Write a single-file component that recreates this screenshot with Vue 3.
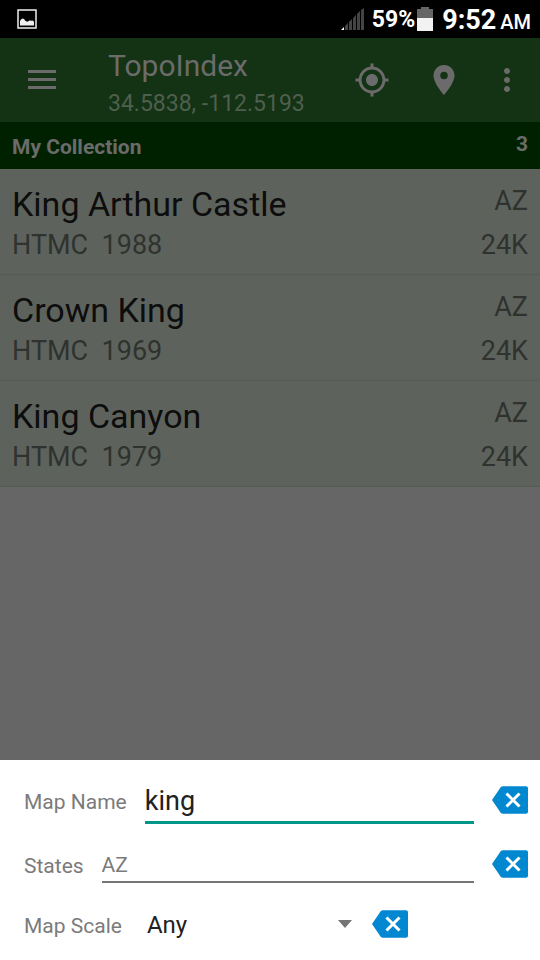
<script setup>
import { ref } from 'vue'

const maps = [
  { name: 'King Arthur Castle', series: 'HTMC', year: 1988, state: 'AZ', scale: '24K' },
  { name: 'Crown King', series: 'HTMC', year: 1969, state: 'AZ', scale: '24K' },
  { name: 'King Canyon', series: 'HTMC', year: 1979, state: 'AZ', scale: '24K' },
]

const mapName = ref('king')
const states = ref('')
const scale = ref('Any')
</script>

<template>
  <div class="screen">
    <div class="status">
      <svg class="picture" width="20" height="20" viewBox="0 0 20 20" aria-hidden="true">
        <rect x="1" y="1" width="18" height="18" fill="none" stroke="#eee" stroke-width="1.5" />
        <path d="M3 16.500v-4.500l1-1.500 1.500-1 1.500.5 1.500 2 2 .7 2-1.200 1.500.3 1.500-.3 1.500 1.200v3.800z" fill="#eee" />
      </svg>
      <div class="status-right">
        <svg class="signal" width="23" height="22" viewBox="0 0 23 22" aria-hidden="true">
          <path d="M4 18l3-3v7H4zM8 14l3-3v11H8zM12 10l3-3v15h-3zM16 6l3-3v19h-3zM20 2l3-2v22h-3z" fill="#444" />
          <path d="M0 22l3-3v3z" fill="#fff" />
        </svg>
        <span class="percent">59%</span>
        <svg class="battery" width="16" height="24" viewBox="0 0 16 24" aria-hidden="true">
          <path d="M4 0h8v2h4v9H0V2h4z" fill="#666" />
          <path d="M0 11h16v13H0z" fill="#f2f2f2" />
        </svg>
        <span class="clock">9:52</span>
        <span class="meridiem">AM</span>
      </div>
    </div>

    <header class="appbar">
      <button class="icon-button" type="button" aria-label="Menu">
        <svg width="28" height="20" viewBox="0 0 28 20"><path d="M0 0h28v3H0zM0 8h28v3H0zM0 16h28v3H0z" /></svg>
      </button>
      <div class="titles">
        <h1>TopoIndex</h1>
        <p>34.5838, -112.5193</p>
      </div>
      <div class="actions">
        <button class="icon-button" type="button" aria-label="My location">
          <svg width="36" height="36" viewBox="0 0 24 24"><path d="M12 8c-2.210 0-4 1.790-4 4s1.790 4 4 4 4-1.790 4-4-1.790-4-4-4zm8.940 3A8.994 8.994 0 0 0 13 3.060V1h-2v2.060A8.994 8.994 0 0 0 3.060 11H1v2h2.060A8.994 8.994 0 0 0 11 20.940V23h2v-2.060A8.994 8.994 0 0 0 20.940 13H23v-2h-2.060zM12 19c-3.870 0-7-3.130-7-7s3.130-7 7-7 7 3.130 7 7-3.130 7-7 7z" /></svg>
        </button>
        <button class="icon-button" type="button" aria-label="Place">
          <svg width="36" height="36" viewBox="0 0 24 24"><path d="M12 2C8.130 2 5 5.130 5 9c0 5.250 7 13 7 13s7-7.750 7-13c0-3.870-3.130-7-7-7zm0 9.500a2.500 2.500 0 1 1 0-5 2.500 2.500 0 0 1 0 5z" /></svg>
        </button>
        <button class="icon-button more" type="button" aria-label="More options">
          <svg width="36" height="36" viewBox="0 0 24 24"><path d="M12 8c1.100 0 2-.9 2-2s-.9-2-2-2-2 .9-2 2 .9 2 2 2zm0 2c-1.100 0-2 .9-2 2s.9 2 2 2 2-.9 2-2-.9-2-2-2zm0 6c-1.100 0-2 .9-2 2s.9 2 2 2 2-.9 2-2-.9-2-2-2z" /></svg>
        </button>
      </div>
    </header>

    <main>
      <h2 class="section">
        <span>My Collection</span>
        <span class="count">{{ maps.length }}</span>
      </h2>
      <ul class="list">
        <li v-for="map in maps" :key="map.name">
          <div class="about">
            <span class="name">{{ map.name }}</span>
            <span class="detail">{{ map.series }}&nbsp; {{ map.year }}</span>
          </div>
          <div class="meta">
            <span class="detail">{{ map.state }}</span>
            <span class="detail">{{ map.scale }}</span>
          </div>
        </li>
      </ul>
    </main>

    <form class="sheet" @submit.prevent>
      <div class="row">
        <label for="map-name">Map Name</label>
        <input id="map-name" v-model="mapName" class="active" type="text" />
        <button class="clear" type="button" aria-label="Clear map name" @click="mapName = ''">
          <svg width="36" height="28" viewBox="0 0 36 28"><path class="tag" d="M11 .3H34a2 2 0 0 1 2 2v23.400a2 2 0 0 1-2 2H11a3 3 0 0 1-2.500-1.300L0 14 8.500 1.600A3 3 0 0 1 11 .3z" /><path class="cross" d="M14.500 7.500l13 13M27.500 7.500l-13 13" /></svg>
        </button>
      </div>
      <div class="row">
        <label for="states">States</label>
        <input id="states" v-model="states" type="text" placeholder="AZ" />
        <button class="clear" type="button" aria-label="Clear states" @click="states = ''">
          <svg width="36" height="28" viewBox="0 0 36 28"><path class="tag" d="M11 .3H34a2 2 0 0 1 2 2v23.400a2 2 0 0 1-2 2H11a3 3 0 0 1-2.500-1.300L0 14 8.500 1.600A3 3 0 0 1 11 .3z" /><path class="cross" d="M14.500 7.500l13 13M27.500 7.500l-13 13" /></svg>
        </button>
      </div>
      <div class="row scale-row">
        <label for="scale">Map Scale</label>
        <div class="select">
          <select id="scale" v-model="scale">
            <option>Any</option>
            <option>24K</option>
          </select>
          <svg class="caret" width="14" height="8" viewBox="0 0 14 8" aria-hidden="true"><path d="M0 0h14L7 8z" /></svg>
        </div>
        <button class="clear" type="button" aria-label="Clear map scale" @click="scale = 'Any'">
          <svg width="36" height="28" viewBox="0 0 36 28"><path class="tag" d="M11 .3H34a2 2 0 0 1 2 2v23.400a2 2 0 0 1-2 2H11a3 3 0 0 1-2.500-1.300L0 14 8.500 1.600A3 3 0 0 1 11 .3z" /><path class="cross" d="M14.500 7.500l13 13M27.500 7.500l-13 13" /></svg>
        </button>
      </div>
    </form>
  </div>
</template>

<style>
body {
  margin: 0;
  background: #666;
}
</style>

<style scoped>
.screen {
  display: flex;
  flex-direction: column;
  min-height: 100vh;
  font-family: Roboto, "Liberation Sans", sans-serif;
}

h1,
h2,
p,
ul {
  margin: 0;
  padding: 0;
  font-weight: 400;
}

svg {
  display: block;
}

button {
  padding: 0;
  border: 0;
  background: none;
}

.status {
  display: flex;
  align-items: center;
  justify-content: space-between;
  height: 38px;
  padding: 0 9px 0 17px;
  background: #000;
  color: #fff;
}

.status-right {
  display: flex;
  align-items: center;
}

.signal {
  margin-right: 8px;
}

.percent {
  font-size: 23px;
  font-weight: 700;
}

.battery {
  margin: 0 9px 0 2px;
}

.clock {
  padding-top: 2px;
  margin-right: 4px;
  font-size: 27px;
  font-weight: 700;
}

.meridiem {
  padding-top: 6px;
  font-size: 20px;
  font-weight: 500;
}

.appbar {
  display: flex;
  align-items: center;
  height: 84px;
  padding: 0 15px 0 28px;
  background: #143214;
}

.icon-button {
  fill: #6b6b6b;
}

.titles {
  display: flex;
  flex: 1;
  flex-direction: column;
  gap: 2px;
  padding: 10px 0 0 52px;
  white-space: nowrap;
}

.titles h1 {
  color: #6b6b6b;
  font-size: 30px;
  line-height: 36px;
}

.titles p {
  color: #4e5f4e;
  font-size: 23px;
  line-height: 36px;
}

.actions {
  display: flex;
  gap: 36px;
}

.actions .more {
  margin-left: -9px;
}

.section {
  display: flex;
  justify-content: space-between;
  padding: 10px 12px 6px;
  background: #002100;
  color: #6b6b6b;
  font-size: 21px;
  font-weight: 700;
  line-height: 31px;
}

.count {
  line-height: 25px;
}

.list {
  list-style: none;
}

.list li {
  display: flex;
  justify-content: space-between;
  padding: 15px 12px 12px;
  border-bottom: 1px solid #575b56;
  background: #5d635c;
}

.about,
.meta {
  display: flex;
  flex-direction: column;
}

.about {
  gap: 4px;
}

.meta {
  align-items: flex-end;
  gap: 10px;
}

.name {
  color: #0d0d0d;
  font-size: 34px;
  line-height: 40px;
}

.detail {
  color: #2f322e;
  font-size: 27px;
  line-height: 34px;
}

.sheet {
  margin-top: auto;
  padding: 8px 12px;
  background: #fff;
}

.row {
  display: flex;
  align-items: center;
  height: 64px;
  padding-left: 12px;
}

label {
  padding-top: 4px;
  color: #7b7b7b;
  font-size: 21px;
}

input {
  box-sizing: border-box;
  flex: 1;
  min-width: 0;
  height: 38px;
  margin: 0 18px;
  padding: 4px 0 0;
  border: 0;
  border-bottom: 2px solid #757575;
  border-radius: 0;
  outline: 0;
  background: none;
  color: #212121;
  font: 21px Roboto, "Liberation Sans", sans-serif;
}

input.active {
  height: 48px;
  border-bottom: 3px solid #009688;
  font-size: 27px;
}

input::placeholder {
  color: #7b7b7b;
  opacity: 1;
}

.clear .tag {
  fill: #0288d1;
}

.clear .cross {
  fill: none;
  stroke: #fff;
  stroke-width: 3;
}

.scale-row {
  height: 56px;
}

.select {
  display: grid;
  flex: 0 1 205px;
  align-items: center;
  margin: 0 20px 0 25px;
}

.select > * {
  grid-area: 1 / 1;
}

select {
  appearance: none;
  width: 100%;
  padding: 2px 0 0;
  border: 0;
  outline: 0;
  background: none;
  color: #212121;
  font: 24px Roboto, "Liberation Sans", sans-serif;
}

.caret {
  justify-self: end;
  fill: #757575;
  pointer-events: none;
}
</style>
